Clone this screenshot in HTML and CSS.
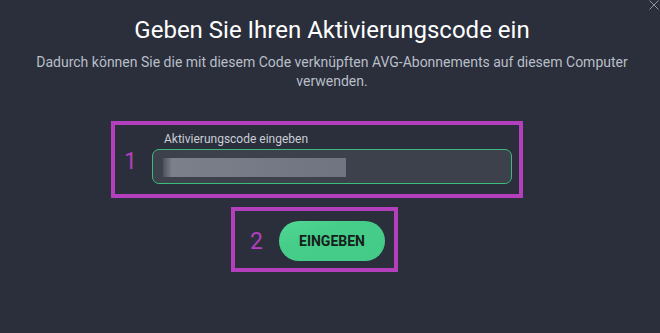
FILE: index.html
```html
<!DOCTYPE html>
<html lang="de">
<head>
<meta charset="utf-8">
<title>Aktivierungscode</title>
<link rel="stylesheet" href="styles.css">
</head>
<body>
<div class="dialog">
  <button class="close" aria-label="Schließen">
    <svg width="10" height="10" viewBox="0 0 10 10"><path d="M0.5 0.5 L9.5 9.5 M9.5 0.5 L0.5 9.5" stroke="#8c919b" stroke-width="1" fill="none"/></svg>
  </button>
  <header class="head">
    <h1 class="title">Geben Sie Ihren Aktivierungscode ein</h1>
    <p class="subtitle">Dadurch können Sie die mit diesem Code verknüpften AVG-Abonnements auf diesem Computer verwenden.</p>
  </header>
  <div class="mark mark-one">
    <span class="num num-one">1</span>
    <div class="field">
      <label class="label">Aktivierungscode eingeben</label>
      <div class="input"><span class="blur"></span></div>
    </div>
  </div>
  <div class="mark mark-two">
    <span class="num num-two">2</span>
    <button class="submit">EINGEBEN</button>
  </div>
</div>
</body>
</html>
```
FILE: styles.css
```css
html, body {
  margin: 0;
  padding: 0;
  background: #2a2f3b;
}
body {
  width: 660px;
  height: 333px;
  overflow: hidden;
  font-family: Roboto, "Liberation Sans", sans-serif;
}
.dialog {
  position: relative;
  display: flex;
  flex-direction: column;
  width: 660px;
  height: 333px;
}
.close {
  position: absolute;
  top: 0;
  right: 1px;
  width: 10px;
  height: 10px;
  padding: 0;
  margin: 0;
  border: 0;
  background: none;
  display: block;
}
.close svg { display: block; }
.head {
  display: flex;
  flex-direction: column;
  align-items: center;
  padding: 16px 0 0 4px;
}
.title {
  margin: 0;
  font-size: 24px;
  line-height: 28px;
  font-weight: 400;
  color: #ffffff;
}
.subtitle {
  margin: 9px 0 0;
  width: 610px;
  text-align: center;
  font-size: 14px;
  line-height: 18.5px;
  color: #b9bec8;
}
.mark {
  box-sizing: border-box;
  border: 4px solid #b43fbd;
  display: flex;
}
.mark-one {
  margin: 31px 0 0 111px;
  width: 412px;
  height: 77px;
  padding: 0 7px 10px 0;
}
.num {
  color: #b43fbd;
  font-size: 23px;
  line-height: 27px;
}
.num-one {
  width: 37px;
  box-sizing: border-box;
  padding: 23px 0 0 9px;
}
.field {
  flex: 1;
  display: flex;
  flex-direction: column;
}
.label {
  padding: 7px 0 0 12px;
  font-size: 12px;
  line-height: 14px;
  color: #c9ced6;
  margin-bottom: 3px;
}
.input {
  box-sizing: border-box;
  height: 35px;
  border: 1px solid #3dba7d;
  border-radius: 7px;
  background: #3c414c;
  padding: 8px 0 0 10px;
}
.blur {
  display: block;
  width: 183px;
  height: 19px;
  background: linear-gradient(90deg, #4c515c 0, #7b808a 9px, #747985 60%, #6f7480 100%);
}
.mark-two {
  margin: 9px 0 0 231px;
  width: 167px;
  height: 65px;
  align-items: center;
  padding: 10px 9px 7px 15px;
}
.num-two {
  width: 29px;
}
.submit {
  width: 106px;
  height: 40px;
  border: 0;
  border-radius: 20px;
  background: linear-gradient(160deg, #53d896 0, #45cd89 35%, #43cb87 100%);
  color: #16201b;
  font-family: Roboto, "Liberation Sans", sans-serif;
  font-weight: 700;
  font-size: 14px;
  padding: 0;
  margin-left: auto;
}
```
